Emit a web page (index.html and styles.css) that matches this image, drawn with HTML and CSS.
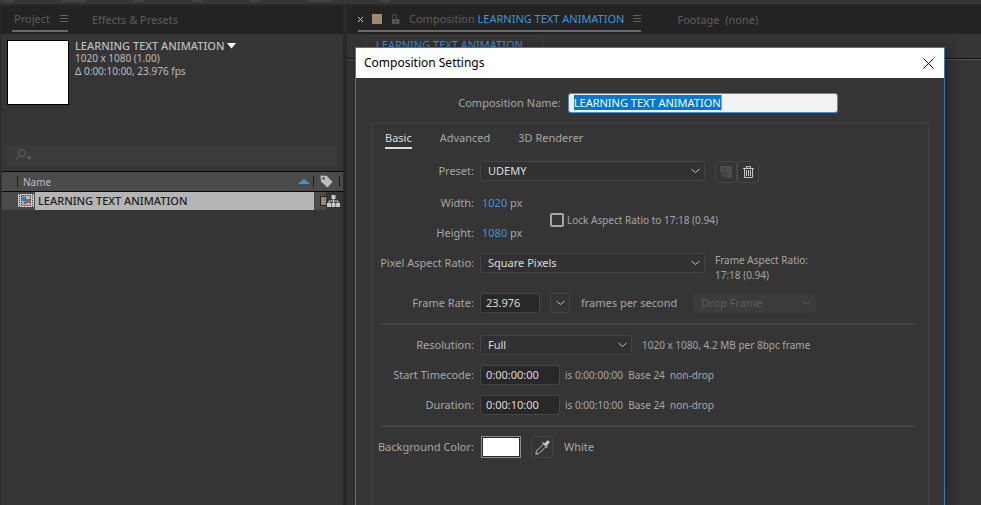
FILE: index.html
```
<!DOCTYPE html>
<html lang="en">
<head>
    <meta charset="UTF-8">
    <meta name="viewport" content="width=device-width, initial-scale=1.0">
    <title>Composition Settings</title>
    <link rel="stylesheet" href="styles.css">
</head>
<body>
    <div class="toolbar">
        <span></span><span class="wide"></span><span></span><span></span><span></span><span class="wide"></span><span></span>
    </div>

    <div class="workspace">
        <section class="panel project">
            <header class="panel-tabs">
                <div class="tab active">Project
                    <svg class="menu-icon" width="8" height="8" viewBox="0 0 8 8"><path d="M0 .5h8M0 3.500h8M0 6.500h8" stroke="currentColor"/></svg>
                </div>
                <div class="tab">Effects &amp; Presets</div>
            </header>

            <div class="preview">
                <div class="thumb"></div>
                <div class="info">
                    <div class="title">
                        <strong>LEARNING TEXT ANIMATION</strong>
                        <svg width="9" height="6" viewBox="0 0 9 6"><path d="M0 0h9L4.500 5.500z" fill="#fff"/></svg>
                    </div>
                    <div>1020 x 1080 (1.00)</div>
                    <div>Δ 0:00:10:00, 23.976 fps</div>
                </div>
            </div>

            <label class="search">
                <svg width="18" height="12" viewBox="0 0 18 12" fill="none" stroke="#626262"><circle cx="7" cy="4" r="3.500"/><path d="M4.500 6.500L.5 11"/><path d="M11 7.500h6l-3 3z" fill="#626262" stroke="none"/></svg>
                <input type="search" aria-label="Search project">
            </label>

            <table class="items">
                <colgroup><col class="c-icon"><col><col class="c-label"><col class="c-flow"></colgroup>
                <thead>
                    <tr>
                        <th colspan="2">
                            <div class="name-head">
                                <span>Name</span>
                                <svg width="12" height="5" viewBox="0 0 12 5"><path d="M0 5L6 0l6 5z" fill="#3f97e0"/></svg>
                            </div>
                        </th>
                        <th colspan="2">
                            <div class="tag-head">
                                <svg width="13" height="13" viewBox="0 0 13 13"><path d="M.5 1.500q0-1 1-1L7 1l5.500 6-5 5.500L1 6.500z" fill="#bdbdbd"/><circle cx="3.500" cy="3.500" r="1.200" fill="#4b4b4b"/></svg>
                            </div>
                        </th>
                    </tr>
                </thead>
                <tbody>
                    <tr>
                        <td class="type">
                            <svg width="16" height="13" viewBox="0 0 16 13"><path d="M0 0h16v13H0z" fill="#c9c9c9"/><path d="M1.500 0v13M14.500 0v13" stroke="#444" stroke-dasharray="1 1"/><path d="M3.500 1.500h9v10h-9z" fill="#bbb" stroke="#444" stroke-dasharray="2 1"/><path d="M7 5h5v4H7z" fill="#c0504a"/><circle cx="6" cy="5" r="2.500" fill="#2e7fb8"/><path d="M5 10l2-3 2 3z" fill="#43805a"/></svg>
                        </td>
                        <td class="name">LEARNING TEXT ANIMATION</td>
                        <td class="swatch"><i></i></td>
                        <td class="flow">
                            <svg width="13" height="12" viewBox="0 0 13 12"><path d="M4.500 0h4v4h-4zM0 8h4v4H0zM4.500 8h4v4h-4zM9 8h4v4H9z" fill="#c8c8c8"/><path d="M6.500 4v4M2 8V6h9v2" fill="none" stroke="#c8c8c8"/></svg>
                        </td>
                    </tr>
                </tbody>
            </table>
        </section>

        <section class="panel comp">
            <header class="panel-tabs">
                <div class="tab active">
                    <svg width="5" height="5" viewBox="0 0 5 5"><path d="M0 0l5 5M5 0L0 5" stroke="#c8c8c8"/></svg>
                    <i class="chip"></i>
                    <svg class="lock" width="9" height="10" viewBox="0 0 9 10"><path d="M1 5h7.500v5H1z" fill="#555"/><path d="M1.500 4V2.500a2 2 0 0 1 4 0V5" fill="none" stroke="#555"/><path d="M4.500 6.500v2" stroke="#232323"/></svg>
                    <span>Composition <a href="#">LEARNING TEXT ANIMATION</a></span>
                    <svg class="menu-icon" width="8" height="8" viewBox="0 0 8 8"><path d="M0 .5h8M0 3.500h8M0 6.500h8" stroke="currentColor"/></svg>
                </div>
                <div class="tab">Footage&nbsp; (none)</div>
            </header>
            <div class="breadcrumb"><a href="#">LEARNING TEXT ANIMATION</a></div>
            <div class="viewer"></div>
        </section>
    </div>

    <div class="dialog" role="dialog" aria-labelledby="dialogTitle">
        <header class="titlebar">
            <span id="dialogTitle">Composition Settings</span>
            <button type="button" aria-label="Close">
                <svg width="11" height="11" viewBox="0 0 11 11"><path d="M.5.5l10 10M10.500.5l-10 10" stroke="#000"/></svg>
            </button>
        </header>

        <form>
            <div class="comp-name">
                <label for="compName">Composition Name:</label>
                <div class="name-field">
                    <input type="text" id="compName" value="LEARNING TEXT ANIMATION" spellcheck="false">
                </div>
            </div>

            <div class="settings">
                <nav class="tabs">
                    <a href="#" class="active">Basic</a>
                    <a href="#">Advanced</a>
                    <a href="#">3D Renderer</a>
                </nav>

                <div class="row preset">
                    <label for="preset">Preset:</label>
                    <div class="select large">
                        <select id="preset"><option>UDEMY</option></select>
                        <svg width="9" height="6" viewBox="0 0 9 6"><path d="M.5 1l4 3.500 4-3.500"/></svg>
                    </div>
                    <div class="buttons">
                        <button type="button" class="icon-btn" aria-label="Save preset" disabled>
                            <svg width="12" height="12" viewBox="0 0 12 12"><path d="M0 0h12v12H6.500V6.500H0z" fill="#4c4c4c"/><path d="M0 7.500h5.500V12z" fill="#4c4c4c"/></svg>
                        </button>
                        <button type="button" class="icon-btn" aria-label="Delete preset">
                            <svg width="11" height="12" viewBox="0 0 11 12" fill="none" stroke="#c4c4c4"><path d="M0 2.500h11M3.500 2V.5h4V2M1.500 3v8.500h8V3M3.500 4v6M5.500 4v6M7.500 4v6"/></svg>
                        </button>
                    </div>
                </div>

                <div class="size">
                    <div class="size-rows">
                        <div class="row">
                            <label for="width">Width:</label>
                            <input type="text" class="hot" id="width" value="1020"> px
                        </div>
                        <div class="row">
                            <label for="height">Height:</label>
                            <input type="text" class="hot" id="height" value="1080"> px
                        </div>
                    </div>
                    <label class="check"><input type="checkbox">Lock Aspect Ratio to 17:18 (0.94)</label>
                </div>

                <div class="row aspect">
                    <label for="par">Pixel Aspect Ratio:</label>
                    <div class="select large">
                        <select id="par"><option>Square Pixels</option></select>
                        <svg width="9" height="6" viewBox="0 0 9 6"><path d="M.5 1l4 3.500 4-3.500"/></svg>
                    </div>
                    <p class="note">Frame Aspect Ratio:<br>17:18 (0.94)</p>
                </div>

                <div class="row rate">
                    <label for="rate">Frame Rate:</label>
                    <input type="text" class="box short" id="rate" value="23.976">
                    <button type="button" class="icon-btn drop" aria-label="Frame rates">
                        <svg width="9" height="6" viewBox="0 0 9 6"><path d="M.5 1l4 3.500 4-3.500"/></svg>
                    </button>
                    <span class="unit">frames per second</span>
                    <div class="select off">
                        <select aria-label="Drop frame" disabled><option>Drop Frame</option></select>
                        <svg width="9" height="6" viewBox="0 0 9 6"><path d="M.5 1l4 3.500 4-3.500"/></svg>
                    </div>
                </div>

                <hr>

                <div class="row">
                    <label for="res">Resolution:</label>
                    <div class="select medium">
                        <select id="res"><option>Full</option></select>
                        <svg width="9" height="6" viewBox="0 0 9 6"><path d="M.5 1l4 3.500 4-3.500"/></svg>
                    </div>
                    <span class="note">1020 x 1080, 4.2 MB per 8bpc frame</span>
                </div>
                <div class="row">
                    <label for="start">Start Timecode:</label>
                    <input type="text" class="box" id="start" value="0:00:00:00">
                    <span class="timecode">is 0:00:00:00&nbsp; Base 24&nbsp; non-drop</span>
                </div>
                <div class="row">
                    <label for="duration">Duration:</label>
                    <input type="text" class="box" id="duration" value="0:00:10:00">
                    <span class="timecode">is 0:00:10:00&nbsp; Base 24&nbsp; non-drop</span>
                </div>

                <hr>

                <div class="row background">
                    <label for="bg">Background Color:</label>
                    <input type="color" id="bg" value="#ffffff">
                    <button type="button" class="icon-btn" aria-label="Pick color">
                        <svg width="15" height="15" viewBox="0 0 15 15"><path d="M8 4.500L1.500 11 .8 14.200 4 13.500 10.500 7" fill="none" stroke="#c4c4c4"/><path d="M7 3l1.200-.8 1.300 1L12 .7q1.500-.7 2.300.3t-.3 2.300L11.700 5.700l1 1.300L12 8z" fill="#c4c4c4"/></svg>
                    </button>
                    <span>White</span>
                </div>
            </div>
        </form>
    </div>

    <script>
        const compName = document.getElementById('compName');
        compName.focus();
        compName.select();
    </script>
</body>
</html>
```
FILE: styles.css
```
* {
    box-sizing: border-box;
}

body {
    margin: 0;
    height: 100vh;
    display: flex;
    flex-direction: column;
    overflow: hidden;
    background: #292929;
    color: #a6a6a6;
    font-family: 'Noto Sans', sans-serif;
    font-size: 11px;
    line-height: 14px;
}

a {
    color: #4193dc;
    text-decoration: none;
}

svg {
    display: block;
    flex: none;
}

input,
select,
button {
    margin: 0;
    padding: 0;
    border: 0;
    background: none;
    color: inherit;
    font: inherit;
    outline: none;
}

/* Toolbar */
.toolbar {
    display: flex;
    gap: 48px;
    flex: none;
    height: 4px;
    padding-left: 4px;
    background: #363636;
}

.toolbar span {
    width: 10px;
    height: 2px;
    background: #434343;
}

.toolbar .wide {
    width: 24px;
}

/* Panels */
.workspace {
    flex: 1;
    display: grid;
    grid-template-columns: 342px 1fr;
    gap: 4px;
    padding: 2px 0 0 1px;
    min-height: 0;
}

.panel {
    background: #353535;
}

.panel-tabs {
    display: flex;
    height: 28px;
    background: #232323;
    color: #5e5e5e;
}

.tab {
    display: flex;
    align-items: center;
    height: 26px;
    padding-top: 2px;
}

.tab.active {
    border-bottom: 2px solid #6b6b6b;
}

.project .panel-tabs {
    padding-left: 11px;
    gap: 24px;
}

.project .tab.active {
    padding-left: 2px;
    gap: 10px;
}

.preview {
    display: flex;
    gap: 6px;
    padding: 5px 6px 6px;
}

.thumb {
    width: 62px;
    height: 65px;
    margin-top: 1px;
    border: 1px solid #000;
    background: #fff;
}

.info {
    color: #bdbdbd;
    font-size: 10px;
    line-height: 13px;
}

.title {
    display: flex;
    align-items: center;
    gap: 3px;
    height: 13px;
    font-size: 11px;
}

.title strong,
.items .name {
    font-weight: 500;
}

.search {
    display: flex;
    align-items: center;
    height: 20px;
    margin: 34px 6px 6px;
    padding-left: 8px;
    border-radius: 2px;
    background: #3b3b3b;
}

.search input {
    flex: 1;
}

.items {
    width: calc(100% - 1px);
    margin-left: 1px;
    border-collapse: collapse;
    table-layout: fixed;
}

.c-icon {
    width: 33px;
}

.c-label {
    width: 12px;
}

.c-flow {
    width: 17px;
}

.items th,
.items td {
    padding: 0;
}

.items thead {
    border-top: 1px solid #080808;
    border-bottom: 1px solid #080808;
    background: #4b4b4b;
    color: #bdbdbd;
}

.items th {
    height: 20px;
    font-weight: 400;
    font-size: 10px;
}

.name-head {
    display: flex;
    align-items: center;
    justify-content: space-between;
    height: 11px;
    margin-left: 15px;
    padding: 0 3px 0 5px;
    border-left: 1px solid #1c1c1c;
    border-right: 1px solid #1c1c1c;
}

.tag-head {
    display: flex;
    align-items: center;
    justify-content: center;
    height: 11px;
    margin-right: 3px;
    border-right: 1px solid #1c1c1c;
}

.items td {
    height: 18px;
}

.type {
    background: #4b4b4b;
}

.type svg {
    margin-left: 16px;
}

.items .name {
    padding-left: 3px;
    background: #b5b5b5;
    color: #1c1c1c;
}

.swatch {
    background: #4b4b4b;
}

.swatch i {
    display: block;
    width: 6px;
    height: 10px;
    margin-left: auto;
    border: 1px solid #222;
    border-right: 0;
    background: #9a8a6a;
}

.items .flow {
    padding-left: 1px;
}

/* Composition panel */
.comp .panel-tabs {
    padding-left: 11px;
    gap: 36px;
}

.comp .tab.active {
    gap: 9px;
}

.chip {
    width: 10px;
    height: 10px;
    background: #9c8b6d;
}

.breadcrumb {
    height: 25px;
    padding: 2px 0 0 19px;
    border-bottom: 1px solid #101010;
}

.breadcrumb a {
    display: inline-block;
    height: 22px;
    padding: 1px 20px 0 9px;
    border: 1px solid #424242;
    border-radius: 3px 3px 0 0;
}

.viewer {
    border-top: 1px solid #555;
}

/* Dialog */
.dialog {
    position: absolute;
    top: 47px;
    right: 36px;
    bottom: 0;
    left: 355px;
    display: flex;
    flex-direction: column;
    border: 1px solid #3a7ab5;
    border-bottom: 0;
    background: #353535;
    box-shadow: 2px 2px 14px rgba(0, 0, 0, 0.4);
}

.titlebar {
    display: flex;
    align-items: center;
    justify-content: space-between;
    flex: none;
    height: 30px;
    padding: 0 10px 0 8px;
    background: #fff;
    color: #000;
    font-size: 12px;
}

form {
    flex: 1;
    display: flex;
    flex-direction: column;
    padding: 15px 15px 0;
}

.comp-name {
    display: flex;
    align-items: center;
    justify-content: center;
    gap: 7px;
    margin-bottom: 10px;
    padding-right: 4px;
}

.name-field {
    position: relative;
    width: 270px;
}

.name-field input {
    display: block;
    width: 100%;
    height: 20px;
    padding: 0 5px 1px;
    border: 1px solid #3f93dc;
    border-radius: 3px;
    background: #f2f2f2;
    color: #222;
}

.name-field input::selection {
    background: #0078d7;
    color: #fff;
}

/* text cursor at the end of the selection */
.name-field::after {
    content: '';
    position: absolute;
    top: 2px;
    left: 153px;
    width: 1px;
    height: 15px;
    background: #e08a3c;
}

.settings {
    flex: 1;
    padding: 0 13px 0 9px;
    border: 1px solid #424242;
    border-bottom: 0;
    border-radius: 3px 3px 0 0;
}

.tabs {
    display: flex;
    gap: 28px;
    margin: 7px 0 12px 4px;
}

.tabs a {
    height: 18px;
    color: #a6a6a6;
}

.tabs .active {
    border-bottom: 2px solid #dcdcdc;
    color: #dcdcdc;
}

.row {
    display: flex;
    align-items: center;
    height: 20px;
    margin-bottom: 10px;
}

.row label {
    display: flex;
    justify-content: flex-end;
    width: 93px;
    margin-right: 6px;
    white-space: nowrap;
}

.row.preset {
    margin-bottom: 12px;
}

.select {
    position: relative;
    border: 1px solid #464646;
    border-radius: 3px;
    background: #313131;
    color: #dcdcdc;
}

.select select {
    display: block;
    appearance: none;
    width: 100%;
    height: 18px;
    padding: 0 0 1px 7px;
}

.select svg {
    position: absolute;
    top: 6px;
    right: 4px;
    pointer-events: none;
}

.select path,
.drop path {
    fill: none;
    stroke: #c4c4c4;
}

.large {
    width: 225px;
}

.medium {
    width: 152px;
}

.off {
    width: 123px;
    border-color: #3b3b3b;
    background: #3b3b3b;
    color: #5e5e5e;
}

.off select {
    opacity: 1;
}

.off path {
    stroke: #5e5e5e;
}

.buttons {
    display: flex;
    align-self: flex-start;
    margin-left: 10px;
}

.icon-btn {
    display: flex;
    align-items: center;
    justify-content: center;
    width: 22px;
    height: 22px;
    border: 1px solid #464646;
    border-radius: 3px;
}

.drop {
    width: 20px;
    height: 20px;
    margin: 0 11px 0 10px;
}

.hot {
    width: 26px;
    margin: 0 2px;
    color: #4193dc;
}

.size {
    display: flex;
    align-items: center;
    margin-bottom: 10px;
}

.size-rows {
    width: 169px;
}

.size .row:last-child {
    margin-bottom: 0;
}

.check {
    display: flex;
    align-items: center;
    gap: 3px;
    padding-top: 4px;
    font-size: 10px;
}

.check input {
    appearance: none;
    width: 14px;
    height: 14px;
    border: 2px solid #a6a6a6;
    border-radius: 2px;
}

.row.aspect {
    align-items: flex-start;
    height: 30px;
}

.aspect label {
    line-height: 20px;
}

.note {
    margin: 0 0 0 10px;
    font-size: 10px;
    line-height: 15px;
}

.box {
    width: 80px;
    height: 20px;
    padding: 0 0 1px 5px;
    border: 1px solid #464646;
    border-radius: 3px;
    background: #282828;
    color: #dcdcdc;
}

.short {
    width: 60px;
}

.unit {
    width: 112px;
}

.timecode {
    margin-left: 5px;
    font-size: 10px;
}

hr {
    height: 2px;
    margin: 0 0 10px;
    border: 0;
    background: #434343;
}

.background input {
    width: 40px;
    height: 22px;
    margin: 0 10px 0 1px;
    border: 1px solid #8c8c8c;
    background: #282828;
}

.background input::-webkit-color-swatch-wrapper {
    padding: 1px;
}

.background input::-webkit-color-swatch {
    border: 0;
}

.background span {
    margin-left: 11px;
}
```
